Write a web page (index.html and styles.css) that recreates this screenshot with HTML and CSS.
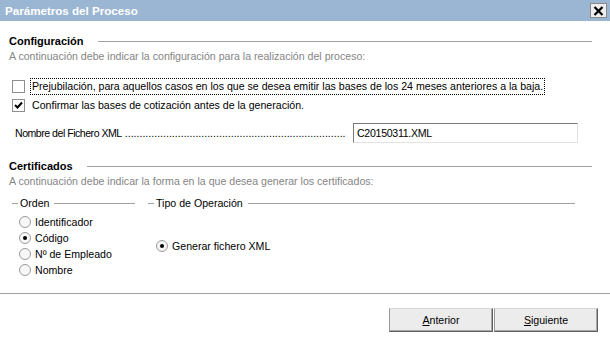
FILE: index.html
```html
<!DOCTYPE html>
<html>
<head>
  <title>Parámetros del Proceso</title>
  <link rel="stylesheet" href="styles.css">
</head>
<body>
  <div class="window">
    <div class="titlebar">
      <span class="title">Parámetros del Proceso</span>
      <span class="close">
        <svg width="11" height="10" viewBox="0 0 11 10"><path d="M1.5 1 L9.5 9 M9.5 1 L1.5 9" stroke="#000" stroke-width="2.2"/></svg>
      </span>
    </div>

    <div class="content">
      <!-- Configuración -->
      <div class="section-head"><span>Configuración</span><span class="rule"></span></div>
      <p class="hint">A continuación debe indicar la configuración para la realización del proceso:</p>

      <label class="check first">
        <span class="box"></span>
        <span class="focus">Prejubilación, para aquellos casos en los que se desea emitir las bases de los 24 meses anteriores a la baja.</span>
      </label>
      <label class="check">
        <span class="box">
          <svg width="11" height="11" viewBox="0 0 11 11"><path d="M2 5 L4.5 7.5 L9 2.5" fill="none" stroke="#000" stroke-width="2"/></svg>
        </span>
        <span class="text">Confirmar las bases de cotización antes de la generación.</span>
      </label>

      <div class="field-row">
        <span class="field-label">Nombre del Fichero XML</span>
        <span class="dots">...........................................................................</span>
        <span class="input">C20150311.XML</span>
      </div>

      <!-- Certificados -->
      <div class="section-head second"><span>Certificados</span><span class="rule"></span></div>
      <p class="hint">A continuación debe indicar la forma en la que desea generar los certificados:</p>

      <div class="groups">
        <div class="group order">
          <div class="group-head"><span class="tick"></span><span>Orden</span><span class="rule"></span></div>
          <div class="radio"><span class="dot"></span>Identificador</div>
          <div class="radio"><span class="dot on"></span>Código</div>
          <div class="radio"><span class="dot"></span>Nº de Empleado</div>
          <div class="radio"><span class="dot"></span>Nombre</div>
        </div>
        <div class="group tipo">
          <div class="group-head"><span class="tick"></span><span>Tipo de Operación</span><span class="rule"></span></div>
          <div class="radio gen"><span class="dot on"></span>Generar fichero XML</div>
        </div>
      </div>
    </div>

    <div class="footer">
      <button class="btn"><u>A</u>nterior</button>
      <button class="btn"><u>S</u>iguiente</button>
    </div>
  </div>
</body>
</html>
```

FILE: styles.css
```css
/* Dialogo de parametros */
body {
  margin: 0;
  padding: 0;
  background: #fff;
  font-family: "Liberation Sans", Arial, sans-serif;
  font-size: 10.6px;
  color: #000;
}

.window {
  width: 610px;
  height: 341px;
  overflow: hidden;
}

.titlebar {
  height: 21px;
  background-color: #9bb6d3;
  display: flex;
  align-items: center;
  justify-content: space-between;
  padding: 0 3px 0 5px;
}

.title {
  color: #fff;
  font-weight: bold;
  font-size: 11.6px;
}

.close {
  width: 17px;
  height: 15px;
  background: #ededed;
  border: 1px solid #8a8a8a;
  box-sizing: border-box;
  display: flex;
  align-items: center;
  justify-content: center;
}

.content {
  padding: 0 18px 0 9px;
}

.section-head {
  display: flex;
  align-items: center;
  height: 14px;
  margin-top: 13px;
  font-weight: bold;
  font-size: 11px;
}

.section-head.second {
  margin-top: 16px;
}

.section-head .rule {
  flex: 1;
  border-top: 1px solid #a0a0a0;
  margin-left: 14px;
}

.hint {
  margin: 1px 0 0;
  height: 14px;
  line-height: 14px;
  color: #858585;
}

.check {
  display: flex;
  align-items: center;
  height: 16px;
  margin-top: 3px;
  padding-left: 3px;
}

.check.first {
  margin-top: 15px;
}

.box {
  width: 13px;
  height: 13px;
  box-sizing: border-box;
  border: 1px solid #8e8e8e;
  background: #fff;
  display: flex;
  align-items: center;
  justify-content: center;
  margin-right: 5px;
}

.focus {
  border: 1px dotted #000;
  padding: 1px 1px;
  line-height: 13px;
}

.text {
  padding-left: 2px;
}

.field-row {
  display: flex;
  align-items: center;
  margin-top: 10px;
  padding-left: 6px;
  height: 20px;
}

.field-label {
  white-space: nowrap;
  letter-spacing: -0.5px;
}

.dots {
  flex: 1;
  overflow: hidden;
  white-space: nowrap;
  margin-left: 3px;
}

.input {
  width: 225px;
  height: 20px;
  box-sizing: border-box;
  margin: 0 14px 0 8px;
  border: 1px solid;
  border-color: #7a7a7a #e3e3e3 #e3e3e3 #7a7a7a;
  padding-left: 3px;
  line-height: 18px;
  letter-spacing: -0.3px;
}

.groups {
  display: flex;
  margin-top: 8px;
  padding-left: 3px;
}

.group-head {
  display: flex;
  align-items: center;
  height: 14px;
}

.group-head .tick {
  width: 6px;
  border-top: 1px solid #a0a0a0;
  margin-right: 2px;
}

.group-head .rule {
  flex: 1;
  border-top: 1px solid #a0a0a0;
  margin-left: 5px;
}

.group.order {
  width: 123px;
}

.group.tipo {
  width: 427px;
  margin-left: 13px;
}

.radio {
  display: flex;
  align-items: center;
  height: 16px;
  padding-left: 7px;
}

.group.order .group-head {
  margin-bottom: 4px;
}

.radio.gen {
  margin-top: 28px;
  padding-left: 8px;
}

.dot {
  width: 12px;
  height: 12px;
  box-sizing: border-box;
  border-radius: 50%;
  border: 1px solid #9a9a9a;
  background: #f7f7f7;
  margin-right: 4px;
  display: flex;
  align-items: center;
  justify-content: center;
}

.dot.on::after {
  content: "";
  width: 4px;
  height: 4px;
  border-radius: 50%;
  background: #000;
}

.footer {
  margin-top: 15px;
  border-top: 1px solid #a0a0a0;
  display: flex;
  justify-content: flex-end;
  padding: 14px 12px 0 0;
}

.btn {
  width: 104px;
  height: 24px;
  font-family: "Liberation Sans", Arial, sans-serif;
  font-size: 10.6px;
  color: #000;
  background-color: #ececec;
  border: 1px solid;
  border-color: #d6d6d6 #5f5f5f #5f5f5f #9a9a9a;
  box-shadow: inset -1px -1px 0 #a8a8a8;
  padding: 0;
  margin-left: 1px;
}
```
